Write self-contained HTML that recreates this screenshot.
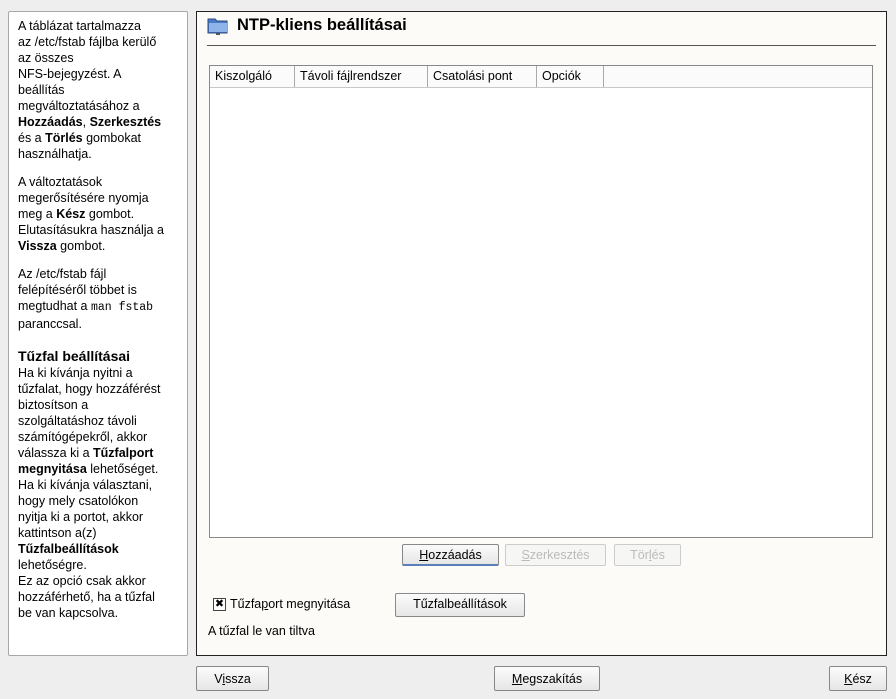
<!DOCTYPE html>
<html><head><meta charset="utf-8"><style>
body{margin:0;width:896px;height:699px;background:#eeeeee;font-family:"Liberation Sans","DejaVu Sans",sans-serif;font-size:12.5px;color:#000;position:relative;overflow:hidden}
.abs{position:absolute}
#left{left:8px;top:11px;width:178px;height:643px;background:#fff;border:1px solid #a8a8a8;border-radius:2px}
#lt{position:absolute;left:9px;top:6px;width:165px;line-height:16px;font-size:12.5px;white-space:nowrap}
#lt p{margin:0 0 12px 0}
#lt h3{margin:0;font-size:14px;line-height:17px;padding-top:4px}
#main{left:196px;top:11px;width:689px;height:643px;background:#fdfbf7;border:1px solid #222}
.btn{position:absolute;height:22px;border:1px solid #888;border-radius:2px;background:linear-gradient(#fbfbfb,#e6e6e6);text-align:center;line-height:21px;font-size:12.5px;box-sizing:border-box}
.dis{color:#bbb;border-color:#ccc;background:#f6f6f4}
</style></head><body>
<div id="left" class="abs"><div id="lt">
<p>A táblázat tartalmazza<br>az /etc/fstab fájlba kerülő<br>az összes<br>NFS-bejegyzést. A<br>beállítás<br>megváltoztatásához a<br><b>Hozzáadás</b>, <b>Szerkesztés</b><br>és a <b>Törlés</b> gombokat<br>használhatja.</p>
<p>A változtatások<br>megerősítésére nyomja<br>meg a <b>Kész</b> gombot.<br>Elutasításukra használja a<br><b>Vissza</b> gombot.</p>
<p>Az /etc/fstab fájl<br>felépítéséről többet is<br>megtudhat a <span style="font-family:'Liberation Mono',monospace;font-size:11.5px">man fstab</span><br>paranccsal.</p>
<h3>Tűzfal beállításai</h3>
<div>Ha ki kívánja nyitni a<br>tűzfalat, hogy hozzáférést<br>biztosítson a<br>szolgáltatáshoz távoli<br>számítógépekről, akkor<br>válassza ki a <b>Tűzfalport</b><br><b>megnyitása</b> lehetőséget.<br>Ha ki kívánja választani,<br>hogy mely csatolókon<br>nyitja ki a portot, akkor<br>kattintson a(z)<br><b>Tűzfalbeállítások</b><br>lehetőségre.<br>Ez az opció csak akkor<br>hozzáférhető, ha a tűzfal<br>be van kapcsolva.</div>
</div></div>
<div id="main" class="abs"></div>
<svg class="abs" style="left:207px;top:16px" width="22" height="20" viewBox="0 0 22 20"><path d="M1 3h7l2 2h10v12H1z" fill="#4a7bc8" stroke="#2a4a80"/><rect x="2" y="7" width="18" height="9" fill="#8fb4ea"/><rect x="9" y="17" width="4" height="2" fill="#555"/></svg>
<div class="abs" style="left:237px;top:16px;font-size:16.5px;font-weight:bold">NTP-kliens beállításai</div>
<div class="abs" style="left:207px;top:45px;width:669px;height:1px;background:#555"></div>
<div class="abs" style="left:209px;top:65px;width:662px;height:471px;border:1px solid #888;background:#fff"></div>
<div class="abs" style="left:210px;top:66px;width:662px;height:21px;border-bottom:1px solid #c8c8c8;background:#fbfbfb"></div>
<div class="abs" style="left:294px;top:66px;width:1px;height:21px;background:#aaa"></div>
<div class="abs" style="left:427px;top:66px;width:1px;height:21px;background:#aaa"></div>
<div class="abs" style="left:536px;top:66px;width:1px;height:21px;background:#aaa"></div>
<div class="abs" style="left:603px;top:66px;width:1px;height:21px;background:#aaa"></div>
<div class="abs" style="left:215px;top:69px">Kiszolgáló</div>
<div class="abs" style="left:300px;top:69px">Távoli fájlrendszer</div>
<div class="abs" style="left:433px;top:69px">Csatolási pont</div>
<div class="abs" style="left:542px;top:69px">Opciók</div>
<div class="btn" style="left:402px;top:544px;width:97px;border-bottom:2px solid #5a7fb8"><u>H</u>ozzáadás</div>
<div class="btn dis" style="left:505px;top:544px;width:101px"><u>S</u>zerkesztés</div>
<div class="btn dis" style="left:614px;top:544px;width:67px">Tör<u>l</u>és</div>
<div class="abs" style="left:213px;top:598px;width:11px;height:11px;border:1px solid #444;background:#fff;font-size:11px;line-height:11px;text-align:center;font-weight:bold">✖</div>
<div class="abs" style="left:230px;top:597px">Tűzfa<u>p</u>ort megnyitása</div>
<div class="btn" style="left:395px;top:593px;width:130px;height:24px">Tűzfalbeállítások</div>
<div class="abs" style="left:208px;top:624px">A tűzfal le van tiltva</div>
<div class="btn" style="left:196px;top:666px;width:73px;height:25px;line-height:24px">V<u>i</u>ssza</div>
<div class="btn" style="left:494px;top:666px;width:106px;height:25px;line-height:24px"><u>M</u>egszakítás</div>
<div class="btn" style="left:829px;top:666px;width:58px;height:25px;line-height:24px"><u>K</u>ész</div>
</body></html>
